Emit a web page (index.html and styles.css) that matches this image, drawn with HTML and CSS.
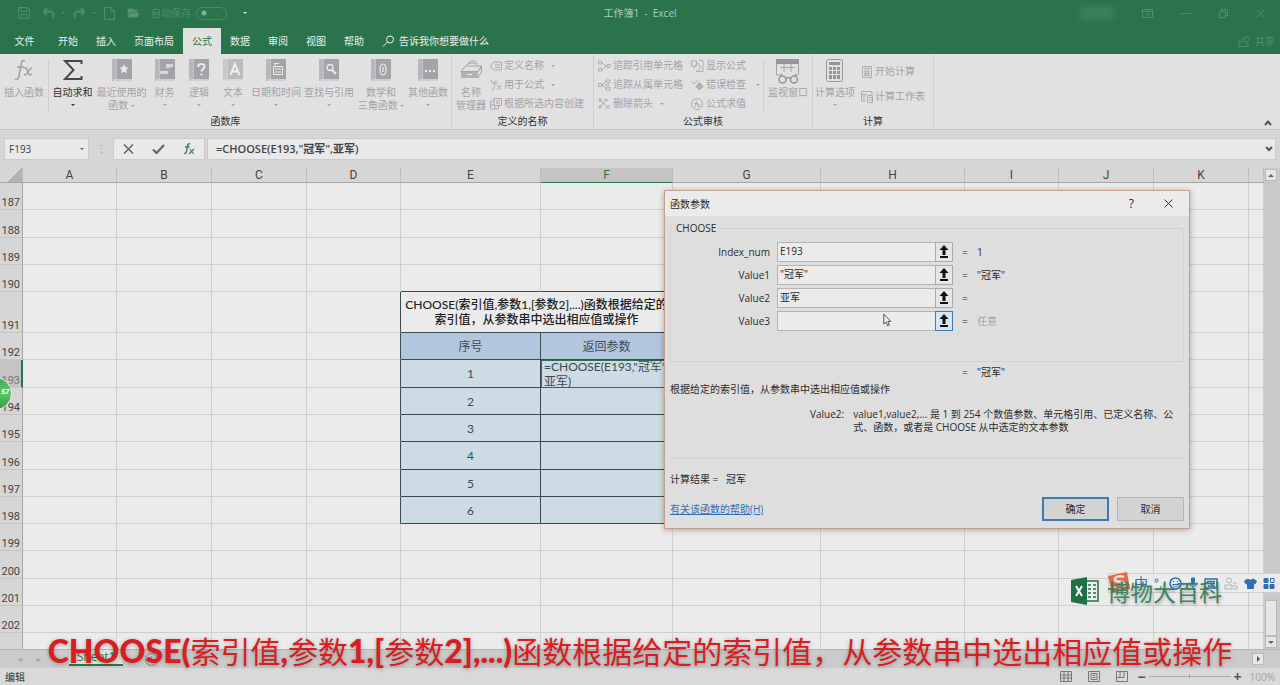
FILE: index.html
```html
<!DOCTYPE html>
<html lang="zh-CN">
<head>
<meta charset="utf-8">
<title>工作簿1 - Excel</title>
<link rel="stylesheet" href="styles.css">
</head>
<body>
<svg class="defs" aria-hidden="true">
  <symbol id="book" viewBox="0 0 20 22"><path fill="#b9b7bb" d="M0 0h4v22H0z"/><path fill="#d0ced2" d="M1 20h19v2H1z"/><path fill="#a5a2a8" d="M4.500 0H20v20H4.500z"/></symbol>
  <symbol id="pick" viewBox="0 0 10 14"><path d="M5 0l4.500 5H6.500v5h-3V5H.5zM1 11h8v2H1z"/></symbol>
</svg>
<div class="app">
  <header class="titlebar">
    <div class="quick">
      <button class="ic" aria-label="保存"><svg width="12" height="12" viewBox="0 0 12 12"><path d="M.5.5h9l2 2v9H.5zM3 .5v4h6v-4M3 11.500V7.500h6v4"/></svg></button>
      <button class="ic" aria-label="撤消"><svg width="13" height="12" viewBox="0 0 13 12"><path stroke-width="2" d="M5 1L1.500 4.500 5 8M2 4.500h6c3 0 4 3 3 6"/></svg></button>
      <i class="caret"></i>
      <button class="ic" aria-label="恢复"><svg width="13" height="12" viewBox="0 0 13 12"><path stroke-width="2" d="M8 1l3.500 3.500L8 8M11 4.500H5c-3 0-4 3-3 6"/></svg></button>
      <i class="caret"></i>
      <button class="ic" aria-label="新建"><svg width="11" height="13" viewBox="0 0 11 13"><path d="M.5.5h6.500l3.500 3.500v8.500H.5zM7 .5V4h3.500"/></svg></button>
      <button class="ic" aria-label="打开"><svg width="12" height="10" viewBox="0 0 12 10"><path fill="#5c9a76" d="M1 9V1h4l1 1h4v2H3zM1 9l3-4h8l-2 4z"/></svg></button>
      <label class="auto">自动保存<input type="checkbox" class="toggle"></label>
      <i class="caret bright"></i>
    </div>
    <h1>工作簿1 &nbsp;- &nbsp;Excel</h1>
    <div class="winbtns">
      <span class="user"></span>
      <button aria-label="功能区显示选项"><svg width="11" height="9" viewBox="0 0 11 9"><path d="M.5.5h10v8H.5zM.5 2.500h10M5.500 7.500v-3M4 5.500l1.500-1.500L7 5.500"/></svg></button>
      <button aria-label="最小化"><svg width="10" height="9" viewBox="0 0 10 9"><path d="M0 4.500h10"/></svg></button>
      <button aria-label="还原"><svg width="9" height="9" viewBox="0 0 9 9"><path d="M.5 2.500h6v6h-6zM2.500 2.500v-2h6v6h-2"/></svg></button>
      <button aria-label="关闭"><svg width="9" height="9" viewBox="0 0 9 9"><path d="M1 1l7 7M8 1L1 8"/></svg></button>
    </div>
  </header>
  <nav class="tabs">
    <button class="file">文件</button><button>开始</button><button>插入</button><button>页面布局</button><button class="on">公式</button><button>数据</button><button>审阅</button><button>视图</button><button>帮助</button>
    <button class="tell"><svg width="13" height="12" viewBox="0 0 13 12"><circle cx="8" cy="4.500" r="3.500"/><path d="M5.500 7L1 11.500"/></svg>告诉我你想要做什么</button>
    <button class="share"><svg width="13" height="12" viewBox="0 0 13 12"><path d="M1 4v7.500h9V8M3 8c0-3 2-5 5-5V1l4 3.500L8 8V6C6 6 4 6.500 3 8z"/></svg>共享</button>
  </nav>

  <section class="ribbon">
    <div class="group g1">
      <div class="items">
        <button class="big fx"><span class="pic"><svg width="20" height="22" viewBox="0 0 20 22"><path fill="none" stroke="#a5a2a8" stroke-width="1.600" d="M11 2c-3-1.500-3.500 1-4 4L5 17c-.5 3-2 4-4 3M3 8h7M10 9c3-1 3 1 4 4s1 4 4 2M18 9c-3 0-4 7-8 7"/></svg></span>插入函数</button>
        <button class="big sum"><span class="pic"><svg width="20" height="22" viewBox="0 0 20 22"><path fill="none" stroke="#48464a" stroke-width="2" d="M18.500 5V2H2l8.500 9L2 20h16.500v-3"/></svg></span>自动求和<i class="caret"></i></button>
        <button class="big recent"><span class="pic"><svg width="20" height="22" viewBox="0 0 20 22"><use href="#book"/><path fill="#ececec" d="M12 5l1.400 3.200 3.400.3-2.600 2.300.8 3.400-3-1.800-3 1.800.8-3.400-2.600-2.300 3.400-.3z"/></svg></span>最近使用的<br>函数 <i class="caret in"></i></button>
        <button class="big n35"><span class="pic"><svg width="20" height="22" viewBox="0 0 20 22"><use href="#book"/><path fill="#d8d6da" d="M11 5h7v3h-7zM5 12h8v3H5zM10 8h5v1h-5z"/></svg></span>财务<i class="caret"></i></button>
        <button class="big n34"><span class="pic"><svg width="20" height="22" viewBox="0 0 20 22"><use href="#book"/><path fill="none" stroke="#ececec" stroke-width="2" d="M9 8c0-4 6.500-4 6.500-.5 0 2.500-3 2.500-3 5M12.500 14.500v2"/></svg></span>逻辑<i class="caret"></i></button>
        <button class="big n34"><span class="pic faint"><svg width="20" height="22" viewBox="0 0 20 22"><use href="#book"/><path fill="none" stroke="#fff" stroke-width="1.800" d="M7.500 16L12 5l4.500 11M9 12.500h6"/></svg></span>文本<i class="caret"></i></button>
        <button class="big n52"><span class="pic"><svg width="20" height="22" viewBox="0 0 20 22"><use href="#book"/><path fill="none" stroke="#ececec" d="M8 4.500h5M7.500 7.500h9v8h-9zM9 10h6M9 13h6M9 5v2"/></svg></span>日期和时间<i class="caret"></i></button>
        <button class="big n54"><span class="pic"><svg width="20" height="22" viewBox="0 0 20 22"><use href="#book"/><circle cx="11" cy="8.500" r="3" fill="none" stroke="#ececec" stroke-width="1.300"/><path stroke="#ececec" stroke-width="2" d="M13 11l4 4"/></svg></span>查找与引用<i class="caret"></i></button>
        <button class="big n50"><span class="pic"><svg width="20" height="22" viewBox="0 0 20 22"><use href="#book"/><path fill="none" stroke="#ececec" stroke-width="1.200" d="M12 5c-4 0-4 11 0 11s4-11 0-11zM12 8v5"/></svg></span>数学和<br>三角函数 <i class="caret in"></i></button>
        <button class="big n44"><span class="pic"><svg width="20" height="22" viewBox="0 0 20 22"><use href="#book"/><path fill="#ececec" d="M7 11h2v2H7zM11 11h2v2h-2zM15 11h2v2h-2z"/></svg></span>其他函数<i class="caret"></i></button>
      </div>
      <div class="cap">函数库</div>
    </div>
    <div class="group g2">
      <div class="items">
        <button class="big manager"><span class="pic"><svg width="23" height="22" viewBox="0 0 23 22"><path fill="none" stroke="#a5a2a8" d="M1 12.500L5.500 7h16L18 12.500zM18 12.500l3.500-5.500v6L18 19M8 5c2-4 8-4 9 0M6 7c2-4 9-4 12 0"/><path fill="#b3b0b6" d="M1 13h17v6H1z"/><path stroke="#e8e8e8" d="M7 15.500h5"/></svg></span>名称<br>管理器</button>
        <div class="list">
          <button><svg width="12" height="12" viewBox="0 0 12 12"><path d="M3.500 2h8v8h-8L.5 6zM5 5h5M5 7.500h5"/></svg>定义名称<i class="caret"></i></button>
          <button><svg width="12" height="12" viewBox="0 0 12 12"><path d="M1 1l2 4M7 1c-2 0-2 3-2.500 6S3 11 1 11M3 4h5M7 6l4 5M11 6l-4 5"/></svg>用于公式<i class="caret"></i></button>
          <button><svg width="12" height="12" viewBox="0 0 12 12"><path d="M4 .5h7.500v7H4zM4 3H.5v8h8V8M6 3h4M6 5h4M1 7h4v4"/></svg>根据所选内容创建</button>
        </div>
      </div>
      <div class="cap">定义的名称</div>
    </div>
    <div class="group g3">
      <div class="items">
        <div class="list l1">
          <button><svg width="13" height="12" viewBox="0 0 13 12"><path d="M.5 1h3v3h-3zM.5 8h3v3h-3zM4 3l4 3-4 4M8 6h1M9 4.500h3v3H9z"/></svg>追踪引用单元格</button>
          <button><svg width="13" height="12" viewBox="0 0 13 12"><path d="M.5 4.500h3v3h-3zM4 6l4-4M4 6l4 4M8 1h4v3H8zM8 8h4v3H8zM6 6h5"/></svg>追踪从属单元格</button>
          <button><svg width="13" height="12" viewBox="0 0 13 12"><path d="M1 1h2v2H1zM1 8h2v2H1zM7 1h2v2H7zM3 3l4 4M3 8l3-4M7 7l5 4M12 7l-5 4"/></svg>删除箭头<i class="caret"></i></button>
        </div>
        <div class="list l2">
          <button><svg width="13" height="12" viewBox="0 0 13 12"><path d="M.5 1h5v5h-5zM8 .5h4v11H5M3 8l3-5M7 3l3 5-4 3"/></svg>显示公式</button>
          <button><svg width="13" height="12" viewBox="0 0 13 12"><path d="M.5 2L3 5l4-4"/><path fill="#b5b2b8" d="M8.500 3.500L12 7.500 8.500 11 5 7.500z"/></svg>错误检查<i class="caret"></i></button>
          <button><svg width="13" height="12" viewBox="0 0 13 12"><circle cx="6" cy="6" r="5.500"/><path d="M6.500 3C5 3 5 9 3.500 9M3.500 5.500H7M6.500 6l2.500 3M9 6L6.500 9"/></svg>公式求值</button>
        </div>
        <button class="big watch"><span class="pic"><svg width="24" height="26" viewBox="0 0 24 26"><path fill="#98959b" d="M0 0h23v5H0z"/><path fill="none" stroke="#a5a2a8" d="M.5 5v11h3M22.500 5v11M4 8.500h15M8 5v8M15 5v8"/><g fill="none" stroke="#98959b" stroke-width="1.500"><circle cx="6.500" cy="20.500" r="3.500"/><circle cx="18" cy="20.500" r="3.500"/><path d="M10 20c1-2 4-2 5 0M4 17l2-2M21 17l-2-2"/></g></svg></span>监视窗口</button>
      </div>
      <div class="cap">公式审核</div>
    </div>
    <div class="group g4">
      <div class="items">
        <button class="big n44"><span class="pic"><svg width="18" height="24" viewBox="0 0 18 24"><rect x=".5" y=".5" width="16" height="22" rx="2" fill="none" stroke="#98959b"/><path fill="#98959b" d="M3 3h11v3H3zM3 8h3v3H3zM7 8h3v3H7zM11 8h3v3h-3zM3 12h3v3H3zM7 12h3v3H7zM11 12h3v3h-3zM3 16h3v4H3zM7 16h3v4H7zM11 16h3v4h-3z"/></svg></span>计算选项<i class="caret"></i></button>
        <div class="list wide">
          <button><svg width="12" height="12" viewBox="0 0 12 12"><path d="M1.500.5h9v11h-9zM3 2.500h6M3 5h6M3 7.500h6M3 9.500h6M4.500 5v5M7 5v5"/></svg>开始计算</button>
          <button><svg width="12" height="12" viewBox="0 0 12 12"><path d="M.5 10V.5H11V4M.5 3.500H6M.5 10h4M6.500 4.500h5v7h-5zM8 6.500h3M8 9h3M3 3v7"/></svg>计算工作表</button>
        </div>
      </div>
      <div class="cap">计算</div>
    </div>
    <button class="fold" aria-label="折叠功能区"><svg width="8" height="6" viewBox="0 0 8 6"><path d="M1 5l3-3.500L7 5"/></svg></button>
  </section>

  <section class="fbar">
    <div class="namebox"><input aria-label="名称框" value="F193"><i class="caret"></i></div>
    <span class="dots">⋮</span>
    <div class="fbtns">
      <button aria-label="取消输入"><svg width="11" height="10" viewBox="0 0 11 10"><path d="M1 .5l9 9M10 .5l-9 9"/></svg></button>
      <button aria-label="输入"><svg width="13" height="10" viewBox="0 0 13 10"><path stroke-width="2.200" d="M1 5.500L4.500 9 12 1"/></svg></button>
      <button aria-label="插入函数"><svg class="gfx" width="12" height="12" viewBox="0 0 12 12"><path d="M7 1C4.500 0 4.500 3 4 6s-1 5-3 4.500M2 4h4.500"/><path stroke-width="1.200" d="M7 6l3.500 5M11 6l-5 5"/></svg></button>
    </div>
    <div class="formula"><input aria-label="编辑栏" value='=CHOOSE(E193,"冠军",亚军)'><svg width="8" height="6" viewBox="0 0 8 6"><path d="M1 1l3 3 3-3"/></svg></div>
  </section>

  <main class="sheet">
    <div class="gridwrap">
    <table class="grid">
      <colgroup><col class="c0"><col class="ca"><col class="cb"><col class="cb"><col class="ca"><col class="ce"><col class="cf"><col class="cg"><col class="ch"><col class="ca"><col class="cb"><col class="cb"><col></colgroup>
      <thead><tr><th class="corner"></th><th>A</th><th>B</th><th>C</th><th>D</th><th>E</th><th class="sel">F</th><th>G</th><th>H</th><th>I</th><th>J</th><th>K</th><th></th></tr></thead>
      <tbody>
      <tr><th>187</th><td></td><td></td><td></td><td></td><td></td><td></td><td></td><td></td><td></td><td></td><td></td><td></td></tr>
      <tr class="t"><th>188</th><td></td><td></td><td></td><td></td><td></td><td></td><td></td><td></td><td></td><td></td><td></td><td></td></tr>
      <tr><th>189</th><td></td><td></td><td></td><td></td><td></td><td></td><td></td><td></td><td></td><td></td><td></td><td></td></tr>
      <tr><th>190</th><td></td><td></td><td></td><td></td><td class="kb"></td><td class="kb"></td><td></td><td></td><td></td><td></td><td></td><td></td></tr>
      <tr class="tall"><th>191</th><td></td><td></td><td></td><td class="kr"></td><td class="k head" colspan="2">CHOOSE(索引值,参数1,[参数2],...)函数根据给定的<br>索引值，从参数串中选出相应值或操作</td><td></td><td></td><td></td><td></td><td></td><td></td></tr>
      <tr><th>192</th><td></td><td></td><td></td><td class="kr"></td><td class="k sub">序号</td><td class="k sub">返回参数</td><td></td><td></td><td></td><td></td><td></td><td></td></tr>
      <tr class="t"><th class="sel">193</th><td></td><td></td><td></td><td class="kr"></td><td class="k">1</td><td class="k edit"><div>=CHOOSE(E193,"冠军",<br>亚军)</div></td><td></td><td></td><td></td><td></td><td></td><td></td></tr>
      <tr><th>194</th><td></td><td></td><td></td><td class="kr"></td><td class="k">2</td><td class="k"></td><td></td><td></td><td></td><td></td><td></td><td></td></tr>
      <tr><th>195</th><td></td><td></td><td></td><td class="kr"></td><td class="k">3</td><td class="k"></td><td></td><td></td><td></td><td></td><td></td><td></td></tr>
      <tr class="t"><th>196</th><td></td><td></td><td></td><td class="kr"></td><td class="k">4</td><td class="k"></td><td></td><td></td><td></td><td></td><td></td><td></td></tr>
      <tr><th>197</th><td></td><td></td><td></td><td class="kr"></td><td class="k">5</td><td class="k"></td><td></td><td></td><td></td><td></td><td></td><td></td></tr>
      <tr><th>198</th><td></td><td></td><td></td><td class="kr"></td><td class="k">6</td><td class="k"></td><td></td><td></td><td></td><td></td><td></td><td></td></tr>
      <tr><th>199</th><td></td><td></td><td></td><td></td><td></td><td></td><td></td><td></td><td></td><td></td><td></td><td></td></tr>
      <tr class="t"><th>200</th><td></td><td></td><td></td><td></td><td></td><td></td><td></td><td></td><td></td><td></td><td></td><td></td></tr>
      <tr><th>201</th><td></td><td></td><td></td><td></td><td></td><td></td><td></td><td></td><td></td><td></td><td></td><td></td></tr>
      <tr><th>202</th><td></td><td></td><td></td><td></td><td></td><td></td><td></td><td></td><td></td><td></td><td></td><td></td></tr>
      <tr><th></th><td></td><td></td><td></td><td></td><td></td><td></td><td></td><td></td><td></td><td></td><td></td><td></td></tr>
      </tbody>
    </table>
    </div>
    <div class="vscroll"><button aria-label="向上"><i class="up"></i></button><span></span><div class="thumb"></div><button aria-label="向下"><i class="down"></i></button></div>
  </main>

  <div class="sheetbar">
    <span class="nav">◂</span><span class="nav">▸</span>
    <button class="stab">Sheet1</button>
    <button class="add" aria-label="新工作表"><svg width="13" height="13" viewBox="0 0 13 13"><path d="M6.500 3.500v6M3.500 6.500h6"/><circle cx="6.500" cy="6.500" r="6"/></svg></button>
    <button class="hright" aria-label="向右"><i></i></button>
  </div>
  <footer class="status">
    <span>编辑</span>
    <div class="views">
      <button aria-label="普通"><svg width="12" height="11" viewBox="0 0 12 11"><path d="M.5.5h11v10H.5zM.5 4h11M.5 7h11M4 .5v10M8 .5v10"/></svg></button>
      <button aria-label="页面布局"><svg width="12" height="11" viewBox="0 0 12 11"><path d="M.5.5h11v10H.5zM3 2.500h6v6H3zM4.500 4.500h3M4.500 6.500h3"/></svg></button>
      <button aria-label="分页预览"><svg width="12" height="11" viewBox="0 0 12 11"><path d="M.5 10.500V.5h11v10zM4 .5v6h4v-6M.5 6.500H4"/></svg></button>
    </div>
    <div class="zoom"><b>−</b><input type="range" aria-label="缩放" value="50"><b>+</b><span>100%</span></div>
  </footer>
</div>

<div class="badge">57</div>

<div class="dialog" role="dialog" aria-labelledby="dt">
  <div class="dtitle"><span id="dt">函数参数</span><button aria-label="帮助">?</button><button aria-label="关闭"><svg width="9" height="9" viewBox="0 0 9 9"><path d="M.5.5l8 8M8.500.5l-8 8"/></svg></button></div>
  <fieldset>
    <legend>CHOOSE</legend>
    <div class="row"><label for="a0">Index_num</label><div class="field"><input id="a0" value="E193"><button aria-label="选择"><svg width="10" height="14"><use href="#pick"/></svg></button></div><span>=</span><span>1</span></div>
    <div class="row"><label for="a1">Value1</label><div class="field"><input id="a1" value='"冠军"'><button aria-label="选择"><svg width="10" height="14"><use href="#pick"/></svg></button></div><span>=</span><span>"冠军"</span></div>
    <div class="row"><label for="a2">Value2</label><div class="field"><input id="a2" value="亚军"><button aria-label="选择"><svg width="10" height="14"><use href="#pick"/></svg></button></div><span>=</span><span></span></div>
    <div class="row"><label for="a3">Value3</label><div class="field"><input id="a3"><button class="hot" aria-label="选择"><svg width="10" height="14"><use href="#pick"/></svg></button></div><span>=</span><span class="any">任意</span></div>
  </fieldset>
  <div class="result"><span>=</span><span>"冠军"</span></div>
  <p class="desc">根据给定的索引值，从参数串中选出相应值或操作</p>
  <div class="arg"><span>Value2:</span><p>value1,value2,... 是 1 到 254 个数值参数、单元格引用、已定义名称、公式、函数，或者是 CHOOSE 从中选定的文本参数</p></div>
  <div class="calc">计算结果 = &nbsp; 冠军</div>
  <div class="foot"><a href="#">有关该函数的帮助(H)</a><button class="ok">确定</button><button>取消</button></div>
</div>
<svg class="cursor" width="9" height="14" viewBox="0 0 9 14"><path fill="#f2f2f2" stroke="#555" d="M.8 1v10l2.300-2 1.500 3.800 1.700-.8-1.500-3.500h3z"/></svg>

<div class="ime">
  <svg class="sogou" width="24" height="22" viewBox="0 0 24 22"><path fill="#df6a48" d="M1 4L20 0l3 17-18 4z"/><path fill="none" stroke="#f3ded6" stroke-width="2.500" d="M17 5c-4-2-10 0-9 3s9 0 10 4-7 5-11 3"/></svg>
  <span class="zh">中</span>
  <svg width="9" height="13" viewBox="0 0 9 13"><circle cx="2.500" cy="3.500" r="1.500"/><path d="M7 9v1l-1 2"/></svg>
  <svg width="13" height="13" viewBox="0 0 13 13"><circle cx="6.500" cy="6.500" r="5.500" stroke-width="1.600"/><path d="M3.500 7.500c1 3 5 3 6 0zM4 4.500h1M8 4.500h1"/></svg>
  <svg width="10" height="13" viewBox="0 0 10 13"><path fill="#2f6fb5" d="M3.500 1h3v6h-3z"/><path d="M1 5.500c0 5 8 5 8 0M5 9v3M2.500 12h5"/></svg>
  <svg width="14" height="13" viewBox="0 0 14 13"><path stroke-width="1.500" d="M1 2h12v9H1zM3 4.500h8M3 6.500h8M4 9h6"/></svg>
  <svg class="grey" width="14" height="13" viewBox="0 0 14 13"><circle cx="5" cy="3.500" r="2.500"/><path d="M1 12V8h7v4zM9 6h4M9 9h4v3H9"/></svg>
  <svg width="13" height="13" viewBox="0 0 13 13"><path fill="#2f6fb5" d="M4 2c1 1.500 4 1.500 5 0l3.500 2-1.500 3-1.500-.5V11.500h-6V6.500L2 7 .5 4z"/></svg>
  <svg width="12" height="13" viewBox="0 0 12 13"><path fill="#2f6fb5" d="M1 1.500h4v4H1zM1 7.500h4v4H1zM7 7.500h4v4H7z"/><path d="M7.500 1.500h3.500v4H7.500z"/></svg>
</div>
<div class="mark">
  <svg width="28" height="28" viewBox="0 0 28 28"><path fill="#eee" stroke="#1f7145" stroke-width="1.500" d="M14 4h13v20H14z"/><path stroke="#1f7145" stroke-width="1.500" d="M17 8h3M22 8h3M17 12h3M22 12h3M17 16h3M22 16h3M17 20h3M22 20h3"/><path fill="#1f7145" d="M0 3l16-3v28L0 25z"/><path stroke="#fff" stroke-width="2" d="M5 9l6 10M11 9L5 19"/></svg>
  <span>博物大百科</span>
</div>
<p class="subtitle"><b>CHOOSE(</b>索引值<b>,</b>参数<b>1,[</b>参数<b>2],...)</b>函数根据给定的索引值，从参数串中选出相应值或操作</p>
</body>
</html>
```

FILE: styles.css
```css
* { box-sizing: border-box; }
body {
  margin: 0;
  overflow: hidden;
  font: 10px/14px "Open Sans", "Noto Sans CJK SC", sans-serif;
  color: #333;
}
button {
  font: inherit;
  color: inherit;
  background: none;
  border: 0;
  padding: 0;
  margin: 0;
  white-space: nowrap;
}
input { font: inherit; color: inherit; min-width: 0; }
p, h1 { margin: 0; }
svg { display: block; fill: none; }
.defs { position: absolute; width: 0; height: 0; }
.app { display: flex; flex-direction: column; height: 100vh; background: #d6d6d6; }

.caret {
  display: inline-block;
  border: 2px solid transparent;
  border-top-color: currentColor;
  border-bottom: 0;
}

/* title bar */
.titlebar {
  height: 28px;
  display: grid;
  grid-template-columns: 1fr auto 1fr;
  align-items: center;
  background: #2b744b;
  color: #508d6a;
  padding-bottom: 2px;
}
.titlebar svg, .tabs svg { stroke: currentColor; }
.quick { display: flex; align-items: center; padding-left: 18px; }
.quick .ic { margin-right: 12px; }
.quick .caret { margin: 0 8px 0 -6px; }
.auto { display: flex; align-items: center; gap: 5px; }
.toggle {
  appearance: none;
  width: 31px;
  height: 13px;
  margin: 0;
  border: 1px solid #4a8865;
  border-radius: 7px;
  background: radial-gradient(circle at 7px 5px, #7fb096 2px, transparent 3px);
}
.quick .bright { color: #cfe3d7; margin: 0 0 0 16px; }
.titlebar h1 { font-size: 10px; font-weight: 400; color: #a9ceb8; }
.winbtns { display: flex; justify-content: flex-end; align-items: center; gap: 28px; padding-right: 15px; }
.user { width: 34px; height: 12px; background: #3e8159; filter: blur(3px); }

/* ribbon tabs */
.tabs { height: 26px; display: flex; background: #2b744b; color: #e6f0ea; }
.tabs button { padding: 0 9px; }
.tabs .file { width: 49px; text-align: center; padding: 0; }
.tabs .on { background: #e1e1e1; color: #2b744b; }
.tabs .tell, .tabs .share { display: flex; align-items: center; gap: 4px; }
.tabs .share { margin-left: auto; padding-right: 5px; color: #508d6a; }

/* ribbon */
.ribbon {
  position: relative;
  height: 76px;
  display: flex;
  background: #e1e1e1;
  border-bottom: 1px solid #c4c4c4;
  color: #a5a2a8;
}
.group { display: flex; flex-direction: column; border-right: 1px solid #cfcfcf; margin-bottom: 1px; }
.g1 { width: 452px; }
.g2 { width: 142px; }
.g3 { width: 219px; }
.g4 { width: 121px; }
.items { flex: 1; display: flex; align-items: flex-start; padding-top: 5px; }
.cap { color: #333; text-align: center; line-height: 14px; }
.big { flex: none; line-height: 13px; text-align: center; }
.pic { display: flex; justify-content: center; height: 26px; margin-bottom: 1px; }
.big > .caret { display: block; width: 4px; margin: 5px auto 0; }
.big > .caret.in { display: inline-block; margin: 0; vertical-align: 2px; }
.fx { width: 49px; border-right: 1px solid #cfcfcf; padding-bottom: 12px; }
.sum { width: 47px; color: #333; }
.recent { width: 51px; }
.n34 { width: 34px; }
.n35 { width: 35px; }
.manager { width: 38px; }
.n44 { width: 44px; }
.n50 { width: 50px; }
.n52 { width: 52px; }
.n54 { width: 54px; }
.faint { opacity: .6; }
.list { display: flex; flex-direction: column; line-height: 19px; margin-top: -3px; }
.list button { display: flex; align-items: center; gap: 2px; height: 19px; }
.list svg { stroke: #aeabb1; }
.list .caret { margin-left: 5px; }
.l1 { width: 94px; padding-left: 4px; }
.l2 { width: 75px; padding-left: 3px; }
.l2 .caret { margin-left: 8px; }
.list.wide { margin-top: 0; padding-left: 4px; }
.list.wide button { height: 25px; }
.watch { width: 49px; border-left: 1px solid #cfcfcf; padding-bottom: 12px; }
.fold { position: absolute; right: 8px; bottom: 3px; }
.fold svg, .formula svg { stroke: #555; stroke-width: 2; }

/* formula bar */
.fbar { height: 38px; display: flex; align-items: center; padding: 0 4px; font-size: 11px; }
.namebox, .fbtns, .formula {
  height: 22px;
  display: flex;
  align-items: center;
  background: #e9e9e9;
  border: 1px solid #cbcbcb;
}
.namebox { width: 85px; padding-right: 4px; color: #666; }
.namebox input { flex: 1; border: 0; background: none; padding: 0 4px; color: #444; font-size: 10px; }
.dots { width: 24px; text-align: center; color: #999; }
.fbtns { width: 92px; justify-content: space-around; margin-right: 2px; }
.fbtns svg { stroke: #666; stroke-width: 1.500; }
.fbtns .gfx { stroke: #3f8560; }
.formula { flex: 1; padding-right: 2px; }
.formula input { flex: 1; border: 0; background: none; padding: 0 8px; font-weight: 600; color: #444; }

/* cells */
.sheet { flex: 1; min-height: 0; display: flex; background: #ebebeb; }
.gridwrap { flex: 1; min-width: 0; overflow: hidden; }
.grid { width: 100%; table-layout: fixed; border-spacing: 0; font: 12px/15px Lato, "Noto Sans CJK SC", sans-serif; }
.c0 { width: 23px; }
.ca { width: 94px; }
.cb { width: 95px; }
.ce { width: 140px; }
.cf { width: 132px; }
.cg { width: 148px; }
.ch { width: 144px; }
.grid th { font-weight: 400; color: #444; background: #d6d6d6; padding: 0; }
.grid thead th { height: 15px; border-right: 1px solid #bdbdbd; border-bottom: 1px solid #a6a6a6; font: 12px/14px Roboto, sans-serif; }
.grid thead th.sel { background: #c4c4c4; border-bottom-color: #2b744b; color: #2b744b; }
.grid thead .corner { background: linear-gradient(135deg, #d6d6d6 60%, #b3b3b3 60%); }
.grid tbody th {
  font: 11px/13px Roboto, sans-serif;
  text-align: right;
  vertical-align: bottom;
  padding-right: 2px;
  border-right: 1px solid #a6a6a6;
  border-bottom: 1px solid #c6c6c6;
}
.grid tbody th.sel { background: #c4c4c4; border-right: 2px solid #2b744b; padding-right: 1px; color: #777; }
.grid tbody tr { height: 27px; }
.grid tbody .t { height: 28px; }
.grid tbody .tall { height: 41px; }
.grid td { padding: 0; border-right: 1px solid #cfcfcf; border-bottom: 1px solid #cfcfcf; text-align: center; white-space: nowrap; }
.grid .kb { border-bottom-color: #3c4a52; }
.grid .kr { border-right-color: #3c4a52; }
.grid .k { background: #cddbe4; border-color: #3c4a52; color: #3f4a52; }
.grid .head { background: #ebebeb; color: #222; font-weight: 500; }
.grid .sub { background: #b2c6de; }
.grid .edit { border: 1px solid #2b744b; padding-left: 2px; text-align: left; }
.edit div { height: 25px; display: flex; align-items: center; }

.vscroll { width: 16px; padding: 1px 3px 1px 1px; display: flex; flex-direction: column; background: #c9c9c9; }
.vscroll span { flex: 1; }
.vscroll button, .thumb, .hright { background: #e6e6e6; border: 1px solid #bbb; height: 12px; display: flex; align-items: center; justify-content: center; }
.vscroll .thumb { height: 36px; }
.up, .down { border: 3px solid transparent; }
.up { border-top: 0; border-bottom-color: #666; }
.down { border-bottom: 0; border-top-color: #666; }

/* sheet tabs and status bar */
.sheetbar { height: 19px; display: flex; align-items: center; background: #cbcbcb; border-top: 1px solid #b5b5b5; }
.nav { width: 19px; text-align: right; color: #aaa; font: 9px/14px "DejaVu Sans", sans-serif; padding-right: 2px; }
.nav:first-child { width: 24px; }
.stab { margin: 0 22px 2px 26px; width: 54px; height: 16px; background: #e1e1e1; border-bottom: 2px solid #2b744b; color: #2b744b; font-size: 12px; line-height: 14px; }
.add svg { stroke: #888; }
.hright { margin-left: auto; margin-right: 16px; width: 12px; }
.hright i { border: 3px solid transparent; border-right: 0; border-left-color: #555; }
.status { height: 17px; display: flex; align-items: center; padding: 0 5px; background: #d9d9d9; }
.views { margin-left: auto; display: flex; gap: 16px; }
.views svg { stroke: #777; }
.zoom { display: flex; align-items: center; margin-left: 10px; }
.zoom b { font-size: 14px; width: 8px; text-align: center; color: #555; }
.zoom input { appearance: none; width: 82px; height: 1px; margin: 0 3px; background: #aaa; }
.zoom input::-webkit-slider-thumb { appearance: none; width: 1px; height: 5px; background: #aaa; }
.zoom span { margin-left: 8px; font-size: 10px; color: #a3a3a3; }

.badge {
  position: absolute;
  left: -21px;
  top: 377px;
  width: 33px;
  height: 33px;
  border: 1px solid #e4e4e4;
  border-radius: 50%;
  background: linear-gradient(#3fae57, #5cc566 50%, #2f9a49);
  color: #fff;
  font: italic 700 7px/28px "Open Sans", sans-serif;
  text-align: right;
  padding-right: 2px;
}

/* function arguments dialog */
.dialog {
  position: absolute;
  left: 664px;
  top: 190px;
  width: 526px;
  background: #dedede;
  border: 1px solid #c69f88;
  box-shadow: 0 1px 6px rgba(0, 0, 0, .3);
  padding: 0 5px 7px;
  color: #2c2c2c;
}
.dtitle { height: 25px; margin: 0 -5px; padding: 0 16px 0 5px; display: flex; align-items: center; gap: 30px; background: #ebebeb; }
.dtitle span { flex: 1; }
.dtitle svg { stroke: #333; }
.dtitle button { font-size: 12px; }
.dialog fieldset { margin: 5px 0 0; border: 1px solid #d2d2d2; padding: 7px 0 27px; min-width: 0; }
.dialog legend { padding: 0 2px 0 5px; }
.row { display: flex; align-items: center; margin-bottom: 3px; height: 20px; }
.row label { width: 99px; text-align: right; margin-right: 7px; }
.field { display: flex; width: 176px; height: 20px; border: 1px solid #b4b4b4; background: #ebebeb; margin-right: 9px; }
.field input { flex: 1; border: 0; background: none; padding: 0 2px 2px; }
.field button { width: 18px; margin: -1px; border: 1px solid #aaa; display: flex; align-items: center; justify-content: center; background: #e6e6e6; }
.field .hot { border-color: #3d7ab8; background: #d8e6f2; }
.field svg { fill: #111; }
.row > span, .result span { width: 15px; white-space: nowrap; }
.row .any { color: #a5a5a5; }
.result { display: flex; margin: 3px 0 3px 292px; }
.arg { display: flex; gap: 9px; margin: 12px 2px 0 140px; padding-bottom: 24px; line-height: 13px; }
.arg span { flex: none; }
.calc { border-top: 1px solid #d0d0d0; padding-top: 13px; margin-bottom: 11px; }
.foot { display: flex; align-items: center; gap: 8px; }
.foot a { margin-right: auto; color: #2f6fb5; }
.foot button { width: 67px; height: 24px; border: 1px solid #b5b5b5; background: #d3d3d3; }
.foot .ok { border: 2px solid #3d78b0; }
.cursor { position: absolute; left: 883px; top: 313px; }

/* overlays */
.ime {
  position: absolute;
  right: 0;
  top: 573px;
  width: 172px;
  height: 20px;
  padding-right: 5px;
  display: flex;
  align-items: center;
  gap: 6px;
  justify-content: flex-end;
  background: #ebebeb;
  border: 1px solid #cfcfcf;
  border-right: 0;
}
.ime svg { stroke: #2f6fb5; flex: none; }
.ime .grey { stroke: #b5b5b5; }
.ime .sogou { stroke: none; margin-right: -3px; }
.zh { color: #2f6fb5; font-size: 14px; }
.mark {
  position: absolute;
  right: 58px;
  top: 576px;
  display: flex;
  align-items: center;
  gap: 8px;
  font: 23px/30px "Noto Sans CJK SC", sans-serif;
  color: #3d8460;
  text-shadow: 1px 2px 3px rgba(0, 0, 0, .25);
}
.subtitle {
  position: absolute;
  left: 0;
  right: 0;
  bottom: 14px;
  text-align: center;
  white-space: nowrap;
  font: 30px/40px "Noto Sans CJK SC", sans-serif;
  color: #d81e20;
  text-shadow: 0 1px 4px rgba(0, 0, 0, .3);
}
.subtitle b { font: 900 32px/40px Lato, sans-serif; }
```
